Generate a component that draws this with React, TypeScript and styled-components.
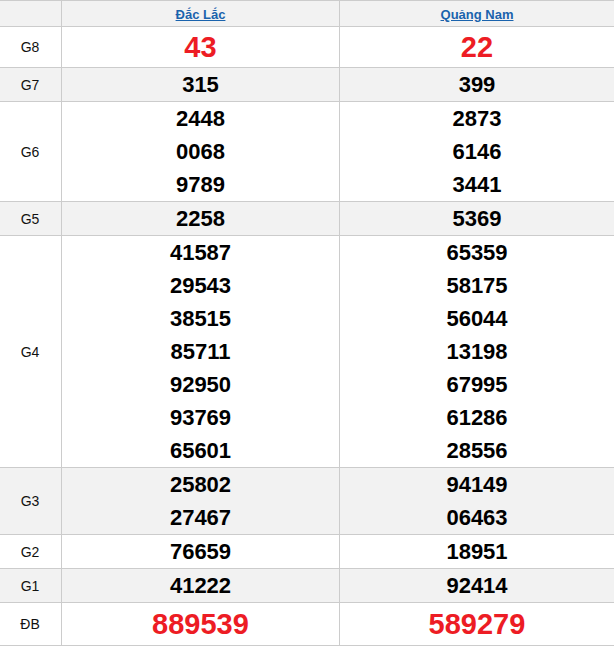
import React from 'react'
import styled, { createGlobalStyle } from 'styled-components'

const GlobalStyle = createGlobalStyle`
  html, body {
    margin: 0;
    padding: 0;
    background: #fff;
  }
  body {
    font-family: 'Liberation Sans', Arial, sans-serif;
  }
`

type Prize = {
  name: string
  values: [string[], string[]]
  kind?: 'big' | 'special'
}

const provinces = ['Đắc Lắc', 'Quảng Nam']

const prizes: Prize[] = [
  { name: 'G8', values: [['43'], ['22']], kind: 'big' },
  { name: 'G7', values: [['315'], ['399']] },
  { name: 'G6', values: [['2448', '0068', '9789'], ['2873', '6146', '3441']] },
  { name: 'G5', values: [['2258'], ['5369']] },
  {
    name: 'G4',
    values: [
      ['41587', '29543', '38515', '85711', '92950', '93769', '65601'],
      ['65359', '58175', '56044', '13198', '67995', '61286', '28556'],
    ],
  },
  { name: 'G3', values: [['25802', '27467'], ['94149', '06463']] },
  { name: 'G2', values: [['76659'], ['18951']] },
  { name: 'G1', values: [['41222'], ['92414']] },
  { name: 'ĐB', values: [['889539'], ['589279']], kind: 'special' },
]

const Frame = styled.div`
  width: 614px;
  overflow: hidden;
`

const ResultTable = styled.table`
  width: 617px;
  margin-left: -2px;
  border-collapse: collapse;
  table-layout: fixed;
`

const HeadCell = styled.th<{ $w?: number }>`
  width: ${({ $w }) => ($w ? `${$w}px` : 'auto')};
  height: 25px;
  padding: 0;
  background: #f2f2f2;
  border: 1px solid #cccccc;
  text-align: center;
  vertical-align: middle;
`

const ProvinceLink = styled.a`
  font-size: 13px;
  font-weight: bold;
  color: #1a63ad;
  text-decoration: underline;
`

const Row = styled.tr<{ $shade: boolean }>`
  background: ${({ $shade }) => ($shade ? '#f2f2f2' : '#ffffff')};
`

const LabelCell = styled.td`
  padding: 0;
  border: 1px solid #cccccc;
  text-align: center;
  vertical-align: middle;
  font-size: 14px;
  color: #111;
`

const NumberCell = styled.td`
  padding: 0;
  border: 1px solid #cccccc;
  text-align: center;
  vertical-align: middle;
`

const Number = styled.div<{ $kind?: 'big' | 'special' }>`
  font-weight: bold;
  font-size: ${({ $kind }) => ($kind ? '29px' : '22px')};
  line-height: ${({ $kind }) => ($kind === 'big' ? '40px' : $kind === 'special' ? '42px' : '33px')};
  color: ${({ $kind }) => ($kind ? '#ed1c24' : '#000')};
`

const App: React.FC = () => {
  return (
    <>
      <GlobalStyle />
      <Frame>
        <ResultTable>
          <thead>
            <tr>
              <HeadCell $w={62} />
              <HeadCell $w={277}>
                <ProvinceLink href="#">{provinces[0]}</ProvinceLink>
              </HeadCell>
              <HeadCell>
                <ProvinceLink href="#">{provinces[1]}</ProvinceLink>
              </HeadCell>
            </tr>
          </thead>
          <tbody>
            {prizes.map((p, i) => (
              <Row key={p.name} $shade={i % 2 === 1}>
                <LabelCell>{p.name}</LabelCell>
                {p.values.map((col, c) => (
                  <NumberCell key={c}>
                    {col.map((v) => (
                      <Number key={v} $kind={p.kind}>
                        {v}
                      </Number>
                    ))}
                  </NumberCell>
                ))}
              </Row>
            ))}
          </tbody>
        </ResultTable>
      </Frame>
    </>
  )
}

export default App
